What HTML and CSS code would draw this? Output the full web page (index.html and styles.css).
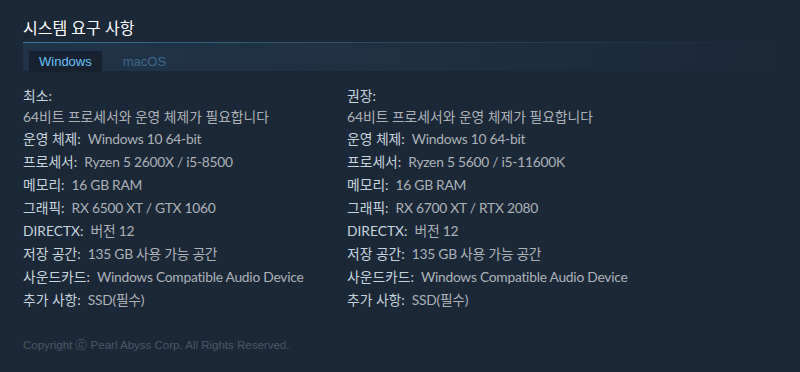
FILE: index.html
```html
<!DOCTYPE html>
<html lang="ko">
<head>
<meta charset="utf-8">
<link rel="stylesheet" href="styles.css">
</head>
<body>
<div class="page">
  <h2 class="title">시스템 요구 사항</h2>
  <div class="tabs">
    <div class="tab active">Windows</div>
    <div class="tab">macOS</div>
  </div>
  <div class="req">
    <div class="col">
      <div class="head">최소:</div>
      <ul class="list">
        <li class="first">64비트 프로세서와 운영 체제가 필요합니다</li>
        <li><span class="lbl">운영 체제:</span><span class="val">Windows 10 64-bit</span></li>
        <li><span class="lbl">프로세서:</span><span class="val">Ryzen 5 2600X / i5-8500</span></li>
        <li><span class="lbl">메모리:</span><span class="val">16 GB RAM</span></li>
        <li><span class="lbl">그래픽:</span><span class="val">RX 6500 XT / GTX 1060</span></li>
        <li><span class="lbl">DIRECTX:</span><span class="val">버전 12</span></li>
        <li><span class="lbl">저장 공간:</span><span class="val">135 GB 사용 가능 공간</span></li>
        <li><span class="lbl">사운드카드:</span><span class="val">Windows Compatible Audio Device</span></li>
        <li><span class="lbl">추가 사항:</span><span class="val">SSD(필수)</span></li>
      </ul>
    </div>
    <div class="col">
      <div class="head">권장:</div>
      <ul class="list">
        <li class="first">64비트 프로세서와 운영 체제가 필요합니다</li>
        <li><span class="lbl">운영 체제:</span><span class="val">Windows 10 64-bit</span></li>
        <li><span class="lbl">프로세서:</span><span class="val">Ryzen 5 5600 / i5-11600K</span></li>
        <li><span class="lbl">메모리:</span><span class="val">16 GB RAM</span></li>
        <li><span class="lbl">그래픽:</span><span class="val">RX 6700 XT / RTX 2080</span></li>
        <li><span class="lbl">DIRECTX:</span><span class="val">버전 12</span></li>
        <li><span class="lbl">저장 공간:</span><span class="val">135 GB 사용 가능 공간</span></li>
        <li><span class="lbl">사운드카드:</span><span class="val">Windows Compatible Audio Device</span></li>
        <li><span class="lbl">추가 사항:</span><span class="val">SSD(필수)</span></li>
      </ul>
    </div>
  </div>
  <div class="copy">Copyright ⓒ Pearl Abyss Corp. All Rights Reserved.</div>
</div>
</body>
</html>
```

FILE: styles.css
```css
html, body {
  margin: 0;
  padding: 0;
  background: #1b2838;
  height: 100%;
}
body {
  font-family: "Lato", "Noto Sans CJK KR", sans-serif;
  color: #acb2b8;
}
.page {
  padding: 18px 23px 0 23px;
}
.title {
  margin: 0;
  font-family: "Noto Sans", "Noto Sans CJK KR", sans-serif;
  font-size: 16px;
  line-height: 20px;
  font-weight: normal;
  color: #ffffff;
  padding-bottom: 4px;
}
.tabs {
  display: flex;
  height: 29px;
  box-sizing: border-box;
  padding: 8px 0 0 6px;
  border-top: 1px solid;
  border-image: linear-gradient(90deg, #3d7398 0%, #2d5069 40%, #1b2838 100%) 1;
  background: linear-gradient(90deg, #213347 0%, #1f3043 50%, #1b2838 100%);
}
.tab {
  font-family: "Liberation Sans", Arial, sans-serif;
  font-size: 13px;
  line-height: 21px;
  height: 21px;
  padding: 0 10px;
  color: #3e6888;
}
.tab.active {
  background: #172231;
  color: #67c1f5;
  margin-right: 11px;
}
.req {
  display: flex;
  margin-top: 15px;
}
.col {
  width: 324px;
  font-size: 13.8px;
}
.head {
  line-height: 20px;
  color: #c6d4df;
}
.list {
  list-style: none;
  margin: 0;
  padding: 0;
}
.list li {
  line-height: 23px;
  height: 23px;
  white-space: nowrap;
}
.list li.first {
  line-height: 21px;
  height: 21px;
}
.lbl {
  color: #c6d4df;
  margin-right: 7px;
}
.val {
  letter-spacing: -0.25px;
}
.copy {
  margin-top: 24px;
  font-family: "Liberation Sans", Arial, sans-serif;
  font-size: 11.5px;
  line-height: 20px;
  color: #4b5766;
}
```
